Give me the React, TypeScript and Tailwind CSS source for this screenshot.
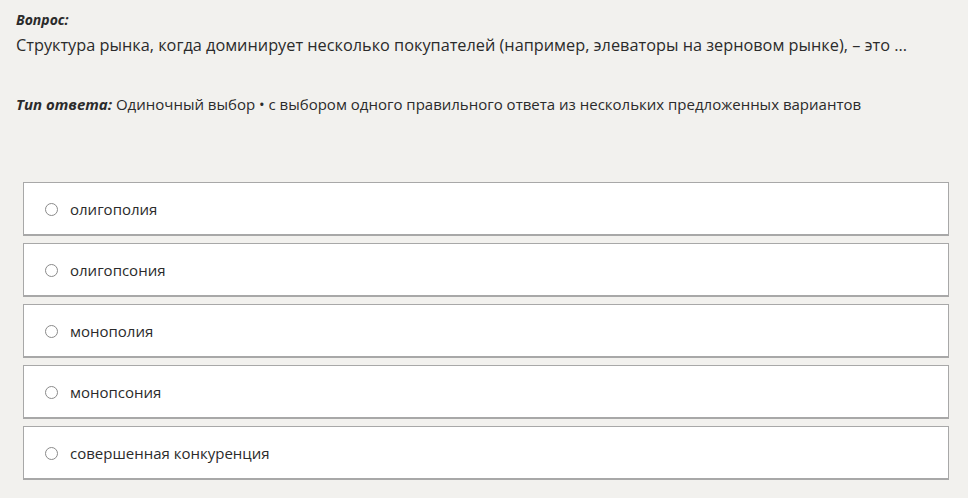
import React from "react";

const options = [
  "олигополия",
  "олигопсония",
  "монополия",
  "монопсония",
  "совершенная конкуренция",
];

export default function App() {
  return (
    <div
      className="w-[968px] h-[498px] bg-[#f2f1ee] text-[#2b2b2b] overflow-hidden"
      style={{ fontFamily: '"Open Sans", "Noto Sans", sans-serif' }}
    >
      <div className="pl-[16px] pt-[10px]">
        <div className="text-[14px] leading-[20px] font-bold italic">Вопрос:</div>
        <div className="text-[16.3px] leading-[24px] mt-[3px]">
          Структура рынка, когда доминирует несколько покупателей (например, элеваторы на зерновом рынке), – это ...
        </div>
        <div className="text-[15px] leading-[20px] mt-[37px]">
          <span className="font-bold italic">Тип ответа:</span> Одиночный выбор • с выбором одного правильного ответа из нескольких предложенных вариантов
        </div>
      </div>
      <div className="ml-[23px] w-[926px] mt-[68px] flex flex-col gap-[7px]">
        {options.map((o) => (
          <div
            key={o}
            className="h-[54px] bg-white border border-[#a8a8a8] border-b-2 flex items-center pl-[21px]"
          >
            <span className="w-[13px] h-[13px] rounded-full border border-[#8a8a8a] bg-white translate-y-[1px]" />
            <span className="ml-[12px] text-[15px] translate-y-[1px]">{o}</span>
          </div>
        ))}
      </div>
    </div>
  );
}
